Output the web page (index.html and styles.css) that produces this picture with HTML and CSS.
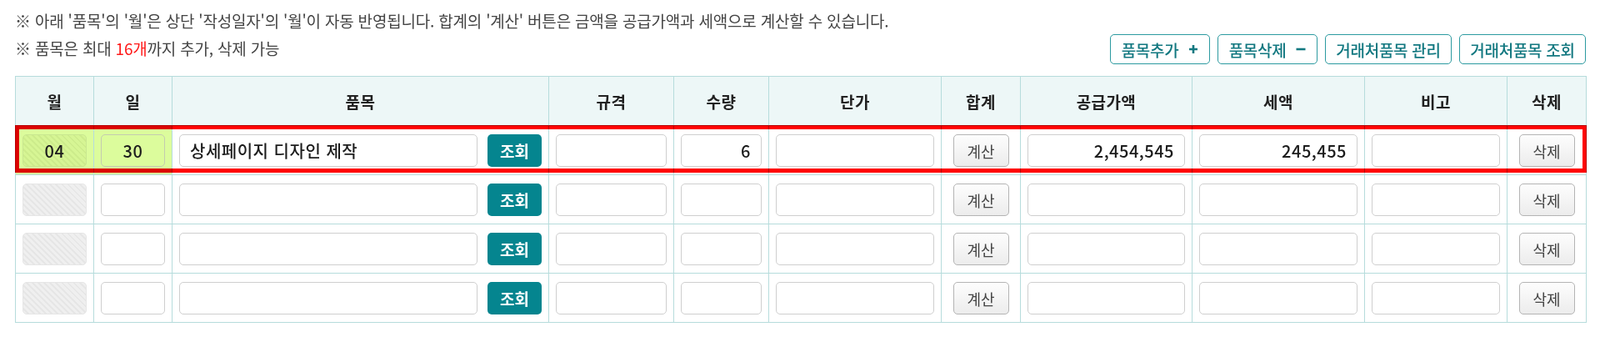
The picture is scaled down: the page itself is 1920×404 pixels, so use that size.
FILE: index.html
```html
<!DOCTYPE html>
<html lang="ko">
<head>
  <meta charset="utf-8" />
  <meta name="viewport" content="width=device-width, initial-scale=1" />
  <title>품목 입력</title>
  <link rel="stylesheet" href="styles.css">
</head>
<body>
  <section class="items">
    <p class="note">※ 아래 '품목'의 '월'은 상단 '작성일자'의 '월'이 자동 반영됩니다. 합계의 '계산' 버튼은 금액을 공급가액과 세액으로 계산할 수 있습니다.</p>
    <div class="toolbar">
      <p class="note">※ 품목은 최대 <em class="hl">16개</em>까지 추가, 삭제 가능</p>
      <div class="actions">
        <button class="btn-line">품목추가
          <svg class="ico" viewBox="0 0 12 12" width="12" height="12"><path d="M6 1v10M1 6h10" /></svg>
        </button>
        <button class="btn-line">품목삭제
          <svg class="ico" viewBox="0 0 12 12" width="12" height="12"><path d="M0.5 6h11" /></svg>
        </button>
        <button class="btn-line wide">거래처품목 관리</button>
        <button class="btn-line wide">거래처품목 조회</button>
      </div>
    </div>

    <div class="table-wrap">
      <table class="grid">
        <colgroup>
          <col style="width:94px"><col style="width:94px"><col style="width:452px"><col style="width:150px">
          <col style="width:114px"><col style="width:207px"><col style="width:95px"><col style="width:206px">
          <col style="width:207px"><col style="width:171px"><col style="width:95px">
        </colgroup>
        <thead>
          <tr>
            <th>월</th><th>일</th><th>품목</th><th>규격</th><th>수량</th><th>단가</th>
            <th>합계</th><th>공급가액</th><th>세액</th><th>비고</th><th>삭제</th>
          </tr>
        </thead>
        <tbody id="rows"></tbody>
      </table>
      <div class="row-mark"></div>
    </div>
  </section>

  <script>
    // first row is filled, others empty (max 16 rows)
    const data = [
      { month: '04', day: '30', name: '상세페이지 디자인 제작', spec: '', qty: '6', price: '', supply: '2,454,545', tax: '245,455', memo: '' },
      {}, {}, {}
    ];

    const tbody = document.getElementById('rows');
    data.forEach((r, i) => {
      const tr = document.createElement('tr');
      if (i === 0) tr.className = 'filled';
      tr.innerHTML = `
        <td><input class="inp inp-lock" value="${r.month || ''}" readonly></td>
        <td><input class="inp inp-c" value="${r.day || ''}"></td>
        <td><div class="item-cell"><input class="inp" value="${r.name || ''}"><button class="btn-find">조회</button></div></td>
        <td><input class="inp" value="${r.spec || ''}"></td>
        <td><input class="inp inp-r" value="${r.qty || ''}"></td>
        <td><input class="inp inp-r" value="${r.price || ''}"></td>
        <td class="c"><button class="btn-gray">계산</button></td>
        <td><input class="inp inp-r" value="${r.supply || ''}"></td>
        <td><input class="inp inp-r" value="${r.tax || ''}"></td>
        <td><input class="inp" value="${r.memo || ''}"></td>
        <td class="c"><button class="btn-gray">삭제</button></td>`;
      tbody.appendChild(tr);
    });
  </script>
</body>
</html>
```

FILE: styles.css
```css
body { margin: 0; background: #fff; color: #222; font-family: "Noto Sans CJK KR", "Noto Sans", sans-serif; }
.items { padding: 8px 17px 0 18px; }
.note { margin: 0; font-size: 19px; line-height: 33px; color: #444; letter-spacing: -0.2px; }
.note .hl { font-style: normal; color: #ff1a1a; }
.toolbar { display: flex; align-items: center; justify-content: space-between; height: 33px; margin-bottom: 17px; }
.actions { display: flex; gap: 9px; margin-top: 3px; }
.btn-line { display: flex; align-items: center; justify-content: center; gap: 12px; width: 120px; height: 36px; padding: 0; border: 1px solid #2c9aa0; border-radius: 5px; background: #fff; color: #127880; font-family: inherit; font-size: 19px; font-weight: 500; letter-spacing: -0.3px; cursor: pointer; }
.btn-line.wide { width: 152px; }
.btn-line .ico { stroke: #127880; stroke-width: 2.6; fill: none; }

.table-wrap { position: relative; width: 1885px; }
.grid { width: 1885px; table-layout: fixed; border-collapse: collapse; }
.grid th, .grid td { border: 1px solid #b6dcdc; }
.grid th { height: 58px; padding: 0; background: #edf7f7; font-size: 19px; font-weight: 700; color: #222; letter-spacing: 0.4px; }
.grid td { padding: 10px 8px 9px; }
.grid td.c { text-align: center; }
.grid tr.filled td:nth-child(-n+2) { background: #dcfc9c; }

.inp { box-sizing: border-box; display: block; width: 100%; height: 39px; padding: 0 12px; border: 1px solid #cfcfcf; border-radius: 5px; background: #fff; font-family: inherit; font-size: 20px; font-weight: 500; letter-spacing: 0.5px; color: #1c1c1c; }
.inp-r { text-align: right; }
.inp-c { text-align: center; }
.inp-lock { text-align: center; border-color: #e6e6e6; background: repeating-linear-gradient(45deg, #efefef 0 3px, #e6e6e6 3px 5px); }
.filled .inp-lock { border-color: #c9e790; background: repeating-linear-gradient(45deg, #d6f594 0 3px, #cdec8c 3px 5px); }
.filled .inp-c { background: transparent; border-color: #c4ccb0; }

.item-cell { display: flex; gap: 12px; }
.btn-find { flex: 0 0 65px; height: 39px; border: 0; border-radius: 5px; background: #05858f; color: #fff; font-family: inherit; font-size: 19px; font-weight: 700; cursor: pointer; }
.btn-gray { width: 67px; height: 39px; border: 1px solid #b4b4b4; border-radius: 5px; background: linear-gradient(#fdfdfd, #ececec); color: #444; font-family: inherit; font-size: 18px; cursor: pointer; }

.row-mark { position: absolute; left: 0; right: -1px; top: 59px; height: 57px; box-sizing: border-box; border: 5px solid #ff0000; mix-blend-mode: multiply; pointer-events: none; }
```
